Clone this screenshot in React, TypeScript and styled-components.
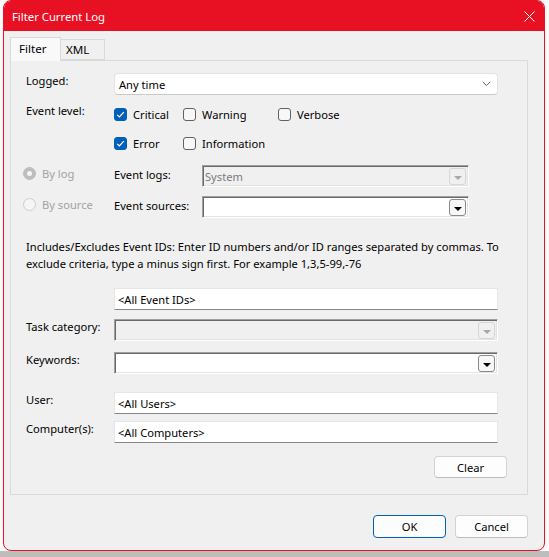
import React from "react";
import styled, { createGlobalStyle } from "styled-components";

const GlobalStyle = createGlobalStyle`
  html, body {
    margin: 0;
    padding: 0;
  }
  body {
    font-family: "Noto Sans", "Segoe UI", sans-serif;
    font-size: 11.15px;
    color: #000;
  }
  * {
    box-sizing: border-box;
  }
`;

const Desktop = styled.div`
  width: 549px;
  height: 557px;
  overflow: hidden;
  padding-left: 3px;
  background: linear-gradient(to bottom, #fbfbfb 0, #fbfbfb 551px, #bdbdbd 551px);
`;

const Window = styled.div`
  width: 542px;
  height: 551px;
  border: 1px solid #e81123;
  border-radius: 8px;
  overflow: hidden;
  background: #f0f0f0;
  display: flex;
  flex-direction: column;
`;

const TitleBar = styled.div`
  height: 30px;
  flex: none;
  background: #e81123;
  color: #fff;
  display: flex;
  align-items: center;
  justify-content: space-between;
  padding: 0 9px 0 8px;
  font-size: 11.3px;
`;

const Body = styled.div`
  padding: 6px 16px 0 6px;
`;

const TabStrip = styled.div`
  display: flex;
  align-items: flex-start;
  height: 24px;
  margin-bottom: -1px;
  position: relative;
  z-index: 1;
`;

const Tab = styled.div<{ $active?: boolean }>`
  height: ${(p) => (p.$active ? 24 : 21)}px;
  margin-top: ${(p) => (p.$active ? 0 : 2)}px;
  width: ${(p) => (p.$active ? 51 : 44)}px;
  padding-left: ${(p) => (p.$active ? 8 : 5)}px;
  line-height: ${(p) => (p.$active ? 21 : 20)}px;
  font-size: 11.6px;
  border: 1px solid #d9d9d9;
  border-bottom: ${(p) => (p.$active ? "none" : "1px solid #d9d9d9")};
  border-left: ${(p) => (p.$active ? "1px solid #d9d9d9" : "none")};
  background: ${(p) => (p.$active ? "#f9f9f9" : "#f0f0f0")};
`;

const Panel = styled.div`
  height: 435px;
  border: 1px solid #dadada;
  padding: 12px 29px 0 12px;
  background: #f0f0f0;
`;

const FormRow = styled.div<{ $mt?: number }>`
  display: grid;
  grid-template-columns: 91px 1fr;
  align-items: start;
  margin-top: ${(p) => p.$mt ?? 0}px;
`;

const SourceRow = styled.div<{ $mt?: number }>`
  display: grid;
  grid-template-columns: 91px 88px 267px;
  align-items: start;
  margin-top: ${(p) => p.$mt ?? 0}px;
`;

const FieldLabel = styled.div<{ $dy?: number; $inset?: number }>`
  line-height: 16px;
  padding-left: ${(p) => p.$inset ?? 3}px;
  margin-top: ${(p) => p.$dy ?? 0}px;
  white-space: nowrap;
`;

const Combo = styled.div`
  height: 22px;
  background: #fff;
  border: 1px solid #e3e3e3;
  border-bottom-color: #c9c9c9;
  border-radius: 4px;
  display: flex;
  align-items: center;
  justify-content: space-between;
  padding: 0 6px 0 4px;
`;

const LevelGrid = styled.div`
  display: grid;
  grid-template-columns: 69px 95px auto;
  row-gap: 12px;
  padding-top: 3px;
`;

const CheckItem = styled.label`
  display: flex;
  align-items: center;
  gap: 6px;
  height: 17px;
  white-space: nowrap;
`;

const CheckBox = styled.span<{ $checked?: boolean }>`
  width: 13px;
  height: 13px;
  flex: none;
  border-radius: 3px;
  border: 1px solid ${(p) => (p.$checked ? "#005fb8" : "#616161")};
  background: ${(p) => (p.$checked ? "#005fb8" : "#f7f7f7")};
  display: flex;
  align-items: center;
  justify-content: center;
`;

const RadioItem = styled.div`
  display: flex;
  align-items: center;
  gap: 6px;
  height: 16px;
  color: #a2a2a2;
  white-space: nowrap;
`;

const Radio = styled.span<{ $checked?: boolean }>`
  width: 13px;
  height: 13px;
  flex: none;
  border-radius: 50%;
  border: 1px solid ${(p) => (p.$checked ? "#bdbdbd" : "#cdcdcd")};
  background: ${(p) => (p.$checked ? "#bdbdbd" : "#f5f5f5")};
  display: flex;
  align-items: center;
  justify-content: center;

  &::after {
    content: "";
    display: ${(p) => (p.$checked ? "block" : "none")};
    width: 5px;
    height: 5px;
    border-radius: 50%;
    background: #f5f5f5;
  }
`;

const SunkenField = styled.div<{ $disabled?: boolean }>`
  height: 22px;
  border: 1px solid;
  border-color: #a0a0a0 #ffffff #ffffff #a0a0a0;
  box-shadow: inset 1px 1px 0 #696969, inset -1px -1px 0 #e3e3e3;
  background: ${(p) => (p.$disabled ? "#f0f0f0" : "#fff")};
  color: #7a7a7a;
  display: flex;
  align-items: center;
  justify-content: space-between;
  padding: 1px 2px 0 2px;
`;

const DropButton = styled.span<{ $disabled?: boolean }>`
  width: 17px;
  height: 17px;
  border-radius: 3px;
  border: 1px solid ${(p) => (p.$disabled ? "#d6d6d6" : "#8a8a8a")};
  background: ${(p) => (p.$disabled ? "#f0f0f0" : "#f8f8f8")};
  display: flex;
  align-items: center;
  justify-content: center;
  margin-left: auto;

  &::after {
    content: "";
    width: 0;
    height: 0;
    border-left: 4px solid transparent;
    border-right: 4px solid transparent;
    border-top: 4px solid ${(p) => (p.$disabled ? "#a8a8a8" : "#000")};
    margin-top: 2px;
  }
`;

const HelpText = styled.p`
  margin: 20px 0 0;
  padding-left: 3px;
  line-height: 17px;
  white-space: nowrap;
`;

const TextField = styled.div`
  height: 22px;
  background: #fff;
  border: 1px solid #e6e6e6;
  border-bottom-color: #868686;
  display: flex;
  align-items: center;
  padding-left: 3px;
`;

const ButtonRow = styled.div<{ $mt: number; $mr?: number }>`
  display: flex;
  justify-content: flex-end;
  gap: 9px;
  margin-top: ${(p) => p.$mt}px;
  margin-right: ${(p) => p.$mr ?? 0}px;
`;

const Button = styled.button<{ $primary?: boolean; $h?: number }>`
  width: 73px;
  height: ${(p) => p.$h ?? 23}px;
  font: inherit;
  color: #000;
  background: #fdfdfd;
  border: 1px solid ${(p) => (p.$primary ? "#005fb8" : "#d3d3d3")};
  border-bottom-color: ${(p) => (p.$primary ? "#005fb8" : "#bdbdbd")};
  border-radius: 4px;
  padding: 0;
`;

const Chevron = () => (
  <svg width="9" height="6" viewBox="0 0 9 6">
    <path d="M0.7 0.8 L4.5 4.6 L8.3 0.8" fill="none" stroke="#606060" strokeWidth="1" />
  </svg>
);

const Tick = () => (
  <svg width="11" height="11" viewBox="0 0 11 11">
    <path d="M2.2 5.8 L4.4 8 L8.8 3.2" fill="none" stroke="#fff" strokeWidth="1.2" />
  </svg>
);

const CloseIcon = () => (
  <svg width="11" height="11" viewBox="0 0 11 11">
    <path d="M0.5 0.5 L10.5 10.5 M10.5 0.5 L0.5 10.5" stroke="#fff" strokeWidth="1" />
  </svg>
);

const Check = ({ label, checked }: { label: string; checked?: boolean }) => (
  <CheckItem>
    <CheckBox $checked={checked}>{checked && <Tick />}</CheckBox>
    {label}
  </CheckItem>
);

export default function App() {
  return (
    <>
      <GlobalStyle />
      <Desktop>
        <Window>
          <TitleBar>
            <span>Filter Current Log</span>
            <CloseIcon />
          </TitleBar>
          <Body>
            <TabStrip>
              <Tab $active>Filter</Tab>
              <Tab>XML</Tab>
            </TabStrip>
            <Panel>
              <FormRow>
                <FieldLabel>Logged:</FieldLabel>
                <Combo>
                  <span>Any time</span>
                  <Chevron />
                </Combo>
              </FormRow>

              <FormRow $mt={8}>
                <FieldLabel>Event level:</FieldLabel>
                <LevelGrid>
                  <Check label="Critical" checked />
                  <Check label="Warning" />
                  <Check label="Verbose" />
                  <Check label="Error" checked />
                  <Check label="Information" />
                </LevelGrid>
              </FormRow>

              <SourceRow $mt={13}>
                <RadioItem>
                  <Radio $checked />
                  By log
                </RadioItem>
                <FieldLabel $dy={2} $inset={0}>Event logs:</FieldLabel>
                <SunkenField $disabled>
                  <span>System</span>
                  <DropButton $disabled />
                </SunkenField>
              </SourceRow>

              <SourceRow $mt={9}>
                <RadioItem>
                  <Radio />
                  By source
                </RadioItem>
                <FieldLabel $dy={2} $inset={0}>Event sources:</FieldLabel>
                <SunkenField>
                  <DropButton />
                </SunkenField>
              </SourceRow>

              <HelpText>
                Includes/Excludes Event IDs: Enter ID numbers and/or ID ranges separated by commas. To
                <br />
                exclude criteria, type a minus sign first. For example 1,3,5-99,-76
              </HelpText>

              <FormRow $mt={16}>
                <span />
                <TextField>&lt;All Event IDs&gt;</TextField>
              </FormRow>

              <FormRow $mt={9}>
                <FieldLabel>Task category:</FieldLabel>
                <SunkenField $disabled>
                  <DropButton $disabled />
                </SunkenField>
              </FormRow>

              <FormRow $mt={11}>
                <FieldLabel>Keywords:</FieldLabel>
                <SunkenField>
                  <DropButton />
                </SunkenField>
              </FormRow>

              <FormRow $mt={18}>
                <FieldLabel>User:</FieldLabel>
                <TextField>&lt;All Users&gt;</TextField>
              </FormRow>

              <FormRow $mt={7}>
                <FieldLabel>Computer(s):</FieldLabel>
                <TextField>&lt;All Computers&gt;</TextField>
              </FormRow>

              <ButtonRow $mt={13} $mr={-9}>
                <Button $h={22}>Clear</Button>
              </ButtonRow>
            </Panel>

            <ButtonRow $mt={20}>
              <Button $primary>OK</Button>
              <Button>Cancel</Button>
            </ButtonRow>
          </Body>
        </Window>
      </Desktop>
    </>
  );
}
